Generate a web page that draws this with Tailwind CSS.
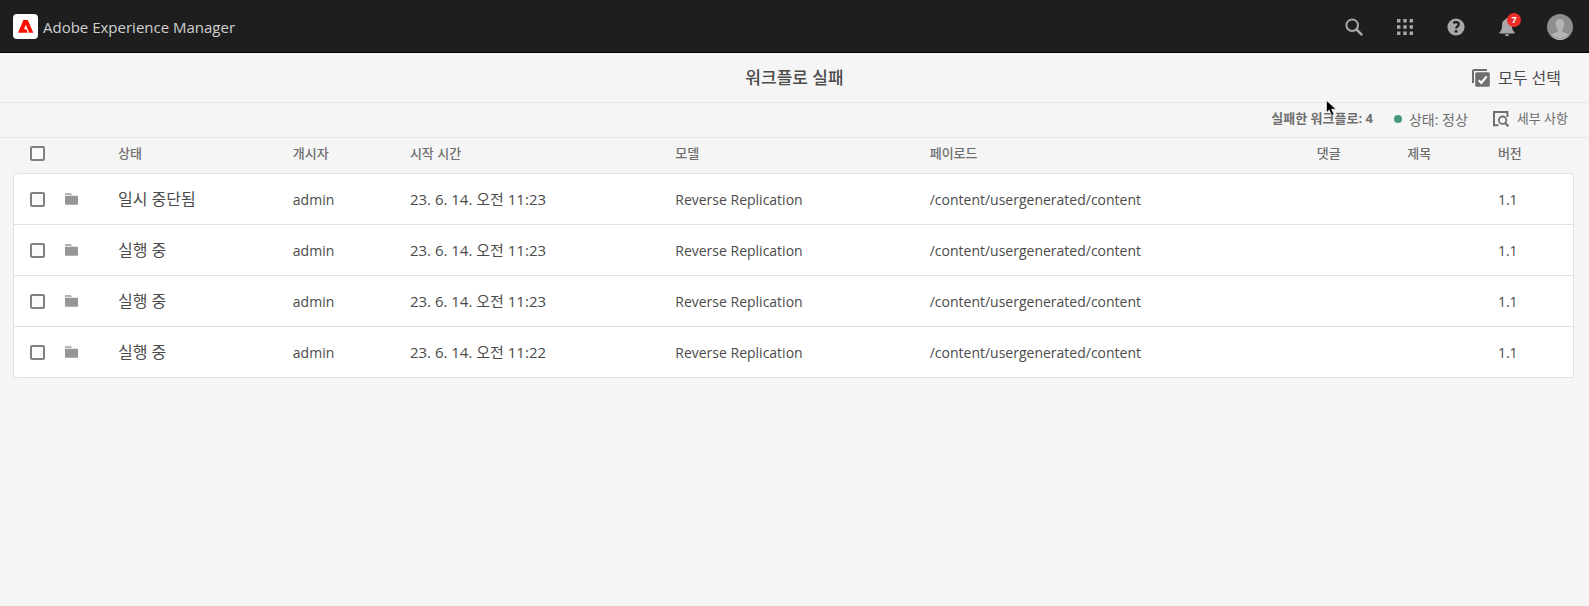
<!DOCTYPE html>
<html lang="ko">
<head>
<meta charset="utf-8">
<meta name="viewport" content="width=device-width, initial-scale=1">
<title>워크플로 실패</title>
<script src="https://cdn.jsdelivr.net/npm/@tailwindcss/browser@4"></script>
</head>
<body class="relative min-h-screen bg-[#f5f5f5] font-['Open_Sans','Noto_Sans_CJK_KR',sans-serif] text-[#4b4b4b]">
<svg class="hidden">
  <symbol id="folder" viewBox="0 0 13 12"><path fill="#b5b5b5" d="M0 0h6l1 2H0z"/><path fill="#969696" d="M0 2.700h12.200q.8 0 .8.8V11q0 .8-.8.8H.8Q0 11.800 0 11z"/></symbol>
</svg>

<header class="flex h-[53px] items-center justify-between border-b border-black bg-[#1e1e1e] pl-[13px] pr-4 pt-px">
  <a href="#" class="flex items-center gap-[5px] text-[15px] text-[#d0d0d0]">
    <svg class="size-[25px]" viewBox="0 0 25 25"><rect width="25" height="25" rx="4" fill="#fff"/><path fill="#fa0f00" d="M5 18.800 10.400 6h4.400L20.300 18.800h-4.100L12.700 10.700 11 15.200h2.300L14.800 18.800z"/></svg>
    <span class="pt-px">Adobe Experience Manager</span>
  </a>
  <nav class="flex items-center gap-[33px]">
    <button aria-label="검색"><svg class="size-[18px]" viewBox="0 0 18 18" fill="none" stroke="#a8a8a8"><circle cx="7.200" cy="7.200" r="5.800" stroke-width="2"/><path d="m11.500 11.500 4.900 4.900" stroke-width="2.600" stroke-linecap="round"/></svg></button>
    <button aria-label="솔루션"><svg class="size-[18px]" viewBox="0 0 18 18" fill="#a8a8a8"><path d="M1 1h3.400v3.400H1zM7.300 1h3.400v3.400H7.300zM13.600 1H17v3.400h-3.400zM1 7.300h3.400v3.400H1zM7.300 7.300h3.400v3.400H7.300zM13.600 7.300H17v3.400h-3.400zM1 13.600h3.400V17H1zM7.300 13.600h3.400V17H7.300zM13.600 13.600H17V17h-3.400z"/></svg></button>
    <button aria-label="도움말"><svg class="size-[18px]" viewBox="0 0 18 18"><circle cx="9" cy="9" r="8.600" fill="#a8a8a8"/><path d="M6.300 5.200C8.300 3.400 11.700 3.900 11.700 6.400c0 2-2.500 2.100-2.500 4.200" fill="none" stroke="#1e1e1e" stroke-width="2.200"/><circle cx="9.100" cy="13.400" r="1.400" fill="#1e1e1e"/></svg></button>
    <button aria-label="알림" class="relative"><svg class="size-[18px]" viewBox="0 0 18 18" fill="#a8a8a8"><path d="M9 0c1 0 1.500.6 1.500 1.500 2.300.7 3.400 2.600 3.400 5.200 0 4 .6 5.600 2.400 7.300.6.700.3 1.400-.5 1.400H2.200c-.8 0-1.100-.7-.5-1.400 1.800-1.700 2.400-3.300 2.400-7.300 0-2.600 1.100-4.500 3.400-5.200C7.500.6 8 0 9 0zM7 16.200h4a2 2 0 0 1-4 0z"/></svg><span class="absolute -top-[5px] left-[9px] flex size-[14px] items-center justify-center rounded-full bg-[#ec2d28] text-[9px] font-bold text-white">7</span></button>
    <button aria-label="사용자" class="-ml-0.5"><svg class="size-[26px]" viewBox="0 0 26 26"><circle cx="13" cy="13" r="13" fill="#8e8e8e"/><path fill="#b4b4b4" d="M13 5c2.900 0 4.500 2.200 4.300 5.200-.1 2.200-.9 3.500-1.800 4.700v2.300c.5 1.400 4.400 1.700 6.100 3.500a13 13 0 0 1-17.200 0c1.700-1.800 5.600-2.100 6.100-3.500v-2.300c-.9-1.200-1.700-2.500-1.800-4.700C8.500 7.200 10.100 5 13 5z"/><path fill="#b4b4b4" d="M4.400 20.700a11.500 11.500 0 0 0 17.200 0c-2 3.400-5 5.300-8.600 5.300s-6.600-1.900-8.600-5.300z"/></svg></button>
  </nav>
</header>

<div class="grid h-[50px] grid-cols-[1fr_auto_1fr] items-center border-b border-[#e6e6e6]">
  <h1 class="col-start-2 text-[17px] font-medium">워크플로 실패</h1>
  <button class="mr-7 flex items-center gap-2 justify-self-end text-[16px]">
    <svg class="size-[18px]" viewBox="0 0 18 18"><path d="M1 14V2.300Q1 1 2.300 1H15" fill="none" stroke="#6e6e6e" stroke-width="2"/><rect x="3.200" y="3.200" width="14.600" height="14.600" rx="1.500" fill="#6e6e6e"/><path d="m6.600 11.200 2.700 2.700 5.400-6.500" fill="none" stroke="#fff" stroke-width="2.200"/></svg>
    모두 선택
  </button>
</div>

<div class="flex h-[35px] items-center justify-end border-b border-[#e6e6e6] pb-0.5 pr-[21px] text-[#6e6e6e]">
  <span class="mr-[21px] text-[13px] font-bold">실패한 워크플로: 4</span>
  <span class="mr-[25px] flex items-center gap-[7px] text-[14px]"><span class="size-2 rounded-full bg-[#46977c]"></span>상태: 정상</span>
  <button class="flex items-center gap-2 text-[13px]">
    <svg class="size-4" viewBox="0 0 16 16" fill="none" stroke="#6e6e6e"><path d="M5.500 14.200H1V1h13.400v5" stroke-width="2"/><circle cx="9.600" cy="9.200" r="3.700" stroke-width="1.800"/><path d="m12.200 12 3.200 3.400" stroke-width="2.200"/></svg>
    세부 사항
  </button>
</div>

<main class="pl-[13px] pr-[15px]">
  <table class="w-full table-fixed border-separate border-spacing-0 text-left">
    <colgroup>
      <col class="w-[52px]"><col class="w-[53px]"><col class="w-[11.2%]"><col class="w-[7.5%]"><col class="w-[17%]"><col class="w-[16.3%]"><col class="w-[24.8%]"><col class="w-[5.8%]"><col class="w-[5.8%]"><col>
    </colgroup>
    <thead>
      <tr class="h-9 text-[13px] text-[#6e6e6e] *:border-b *:border-[#e6e6e6] *:pb-1 *:font-medium">
        <th class="pl-[17px]"><input type="checkbox" aria-label="모두 선택" class="block size-[15px] appearance-none rounded-[2px] border-2 border-[#808080] bg-[#fafafa]"></th>
        <th></th><th>상태</th><th>개시자</th><th>시작 시간</th><th>모델</th><th>페이로드</th><th>댓글</th><th>제목</th><th>버전</th>
      </tr>
    </thead>
    <tbody class="text-[14px] *:h-[51px] *:*:border-b *:*:border-[#e1e1e1] *:*:bg-white *:*:first:border-l *:*:last:border-r">
      <tr>
        <td class="rounded-tl pl-4"><input type="checkbox" aria-label="행 1 선택" class="block size-[15px] appearance-none rounded-[2px] border-2 border-[#808080] bg-[#fafafa]"></td>
        <td><svg class="h-3 w-[13px]"><use href="#folder"/></svg></td>
        <td class="text-[16px]">일시 중단됨</td><td>admin</td><td class="text-[15px]">23. 6. 14. 오전 11:23</td><td>Reverse Replication</td><td>/content/usergenerated/content</td><td></td><td></td><td class="rounded-tr">1.1</td>
      </tr>
      <tr>
        <td class="pl-4"><input type="checkbox" aria-label="행 2 선택" class="block size-[15px] appearance-none rounded-[2px] border-2 border-[#808080] bg-[#fafafa]"></td>
        <td><svg class="h-3 w-[13px]"><use href="#folder"/></svg></td>
        <td class="text-[16px]">실행 중</td><td>admin</td><td class="text-[15px]">23. 6. 14. 오전 11:23</td><td>Reverse Replication</td><td>/content/usergenerated/content</td><td></td><td></td><td>1.1</td>
      </tr>
      <tr>
        <td class="pl-4"><input type="checkbox" aria-label="행 3 선택" class="block size-[15px] appearance-none rounded-[2px] border-2 border-[#808080] bg-[#fafafa]"></td>
        <td><svg class="h-3 w-[13px]"><use href="#folder"/></svg></td>
        <td class="text-[16px]">실행 중</td><td>admin</td><td class="text-[15px]">23. 6. 14. 오전 11:23</td><td>Reverse Replication</td><td>/content/usergenerated/content</td><td></td><td></td><td>1.1</td>
      </tr>
      <tr>
        <td class="rounded-bl pl-4"><input type="checkbox" aria-label="행 4 선택" class="block size-[15px] appearance-none rounded-[2px] border-2 border-[#808080] bg-[#fafafa]"></td>
        <td><svg class="h-3 w-[13px]"><use href="#folder"/></svg></td>
        <td class="text-[16px]">실행 중</td><td>admin</td><td class="text-[15px]">23. 6. 14. 오전 11:22</td><td>Reverse Replication</td><td>/content/usergenerated/content</td><td></td><td></td><td class="rounded-br">1.1</td>
      </tr>
    </tbody>
  </table>
</main>

<!-- Mouse pointer -->
<svg class="pointer-events-none absolute right-[252px] top-[100px] h-[17px] w-[11px]" viewBox="0 0 11 17"><path d="M.5.5v12l2.800-2.600 2.400 5.600 2.300-1-2.400-5.300H10z" fill="#000" stroke="#fff" stroke-width=".6"/></svg>
</body>
</html>
